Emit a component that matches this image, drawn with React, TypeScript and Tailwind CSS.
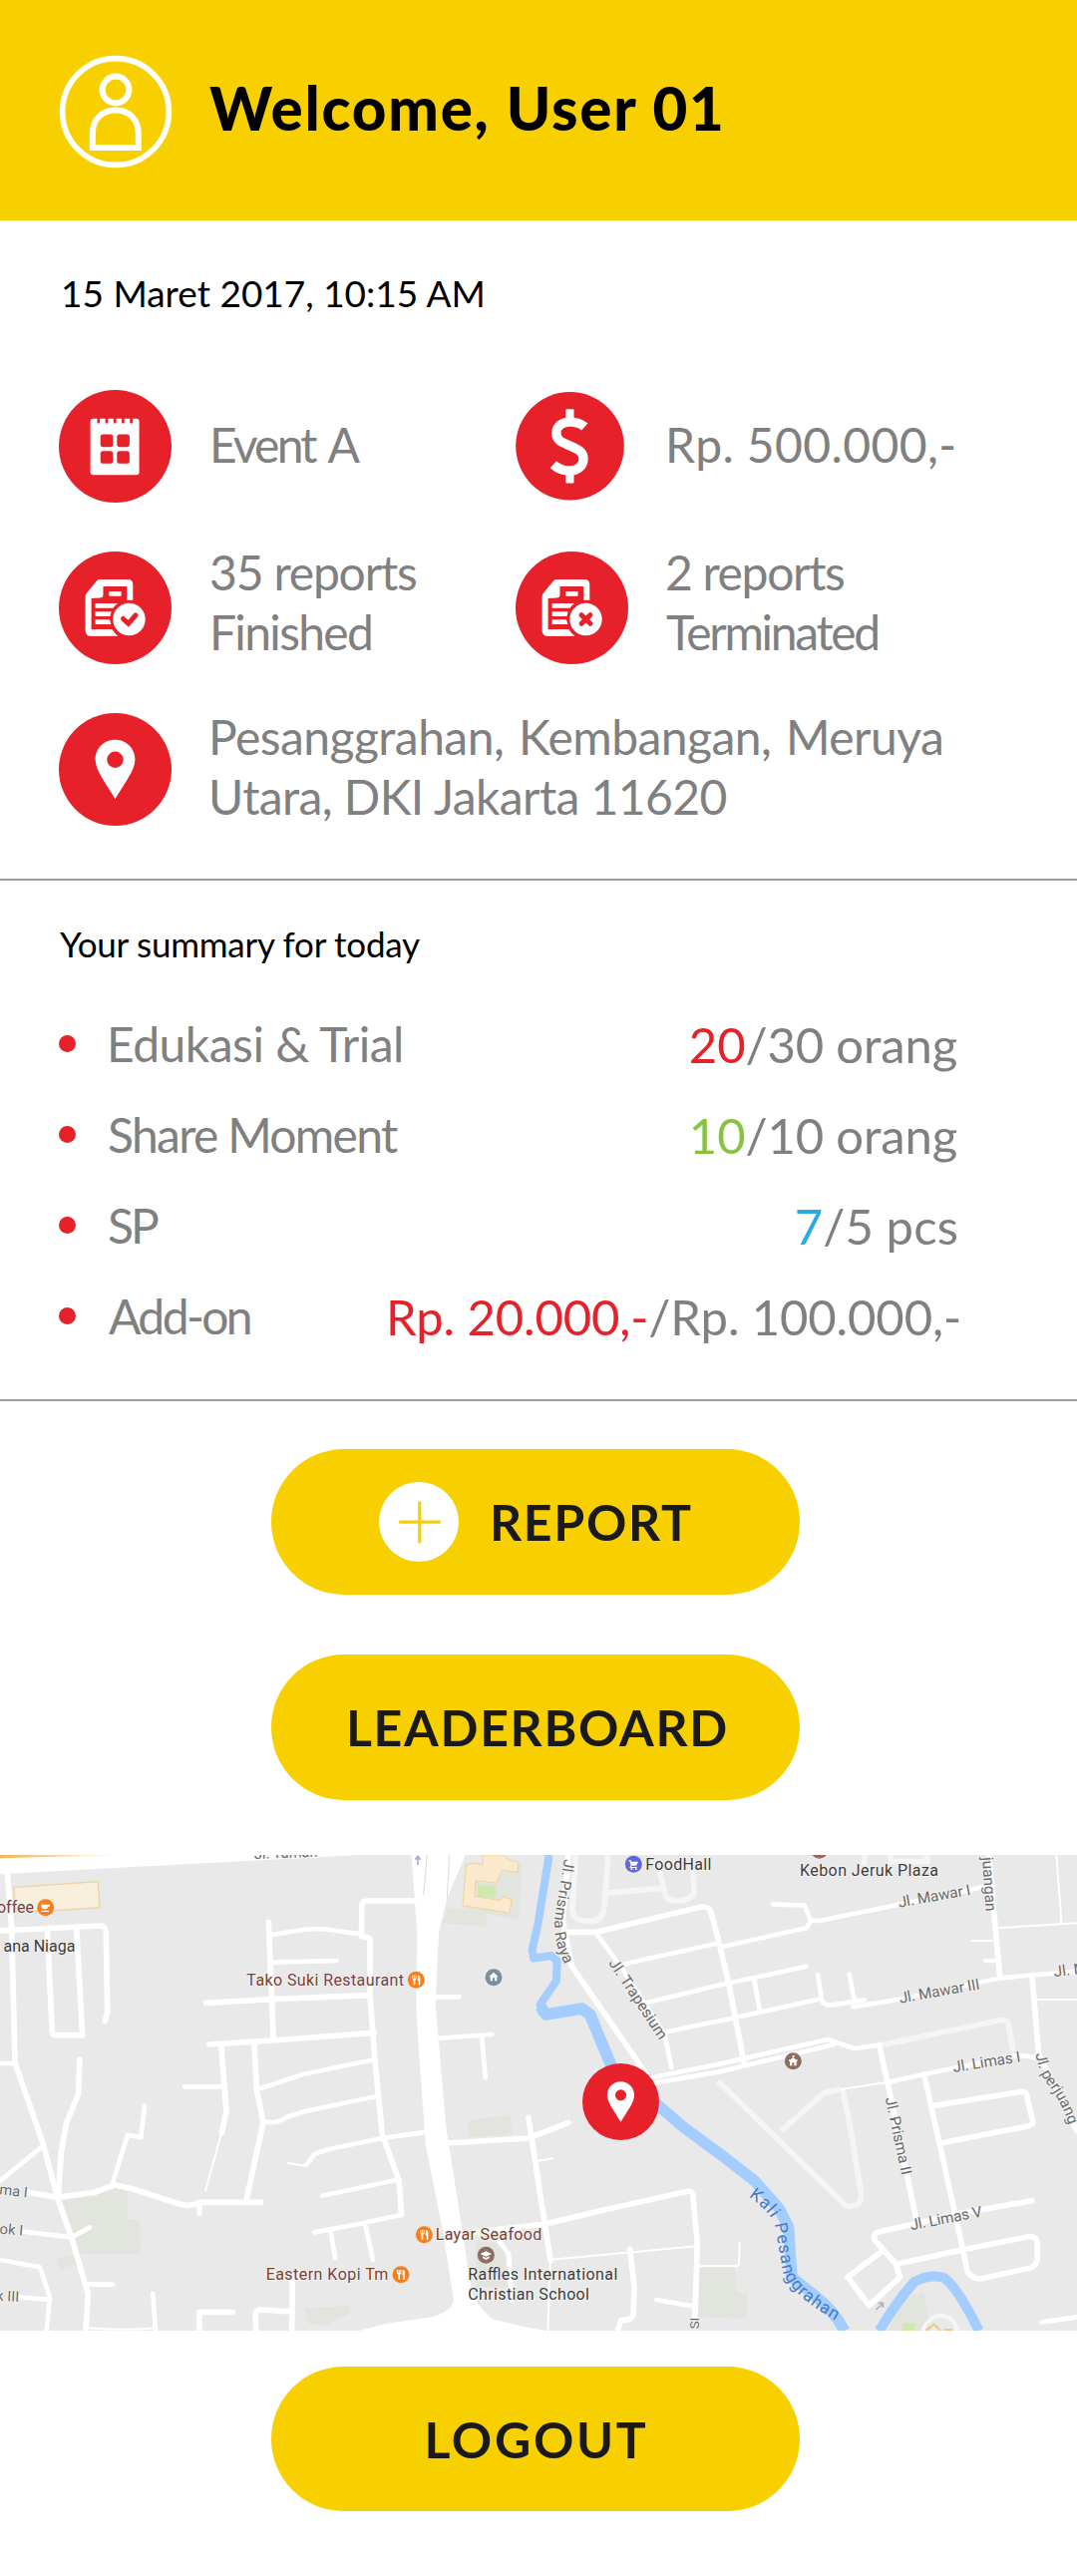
import React, { type ReactNode } from "react";

const RED = "#e62129";

/* ---------- Icons ---------- */

function UserIcon() {
  return (
    <svg viewBox="0 0 114 114" className="size-[114px] shrink-0" fill="none" stroke="#fff">
      <circle cx="57" cy="57" r="53.4" strokeWidth="5.6" />
      <circle cx="57" cy="35" r="13.4" strokeWidth="6" />
      <path d="M33.8 93V79C33.8 65 43 55.5 56.8 55.5S79.8 65 79.8 79V93Z" strokeWidth="6" />
    </svg>
  );
}

function Disc({ children, r = 56.5, cx = 56.5, cy = 56.5 }: { children: ReactNode; r?: number; cx?: number; cy?: number }) {
  return (
    <svg viewBox="0 0 113 113" className="size-full shrink-0">
      <circle cx={cx} cy={cy} r={r} fill={RED} />
      {children}
    </svg>
  );
}

function CalendarIcon() {
  return (
    <Disc>
      <rect x="31.6" y="28.7" width="49" height="56.6" rx="3" fill="#fff" />
      {[39.8, 48, 56.2, 64.4, 72.6].map((x) => (
        <path key={x} d={`M${x} 26V32.3`} stroke={RED} strokeWidth="2.7" strokeLinecap="round" />
      ))}
      <g fill={RED}>
        <rect x="41.7" y="44.6" width="12.6" height="12.6" rx="2.6" />
        <rect x="58.3" y="44.6" width="12.6" height="12.6" rx="2.6" />
        <rect x="41.7" y="61.2" width="12.6" height="12.6" rx="2.6" />
        <rect x="58.3" y="61.2" width="12.6" height="12.6" rx="2.6" />
      </g>
    </Disc>
  );
}

function DollarIcon() {
  return (
    <Disc r={54.3} cx={54.5} cy={56.3}>
      <path
        d="M69.3 37C65.5 33.6 60 32.1 54.7 32.1 46 32.1 40.9 37 40.9 43.5 40.9 51 47.5 53 54.5 56 62 59.2 68 61.5 68 69 68 76.5 62 81 54 81 47.5 81 42 78.5 37.8 74.7"
        fill="none"
        stroke="#fff"
        strokeWidth="9.4"
      />
      <rect x="50.3" y="19.3" width="8.2" height="12" rx="1" fill="#fff" />
      <rect x="50.3" y="81.5" width="8.2" height="12" rx="1" fill="#fff" />
    </Disc>
  );
}

function DocumentIcon({ done }: { done: boolean }) {
  return (
    <Disc>
      <g fill="#fff">
        <path d="M40.4 28H69Q74.3 28 74.3 33V48.8H68.3V35H44.5V43Q44.5 46.5 41 46.5L32.6 47V78H53.5Q55.500 82 59.5 84.8L32 85Q26.6 84.5 26.6 79V45Q26.6 43 28.5 41L37.5 30Q39 28 40.4 28Z" />
        <rect x="50.3" y="40" width="12.3" height="4.7" rx=".6" />
        <path d="M36.6 52H59.3Q56 54 54.5 56.7H36.6ZM36.6 60.3H52.6L51.5 65H36.6ZM36.6 68.3H51L52.3 73H36.6Z" />
        <circle cx="70.5" cy="68" r="16.2" />
      </g>
      <path
        d={done ? "M64.5 67.5 69.7 72.3 77 64" : "M66.1 63.7 74.9 72.3M74.9 63.7 66.1 72.3"}
        fill="none"
        stroke={RED}
        strokeWidth="5"
        strokeLinecap="round"
      />
    </Disc>
  );
}

function PinIcon() {
  return (
    <Disc>
      <path
        d="M56.5 26.7C45.5 26.7 36.6 35.3 36.6 46.5 36.6 58 47.5 70.5 56.5 86.3 65.5 70.5 76.4 58 76.4 46.5 76.4 35.3 67.5 26.7 56.5 26.7Z"
        fill="#fff"
      />
      <circle cx="56.5" cy="46.8" r="8.2" fill={RED} />
    </Disc>
  );
}

function PlusIcon() {
  return (
    <svg viewBox="0 0 80 80" className="size-20 shrink-0">
      <circle cx="40" cy="40" r="40" fill="#fff" />
      <path d="M21.5 40.2H60.5M40.8 20.8V59.8" stroke="#f8d000" strokeWidth="3.3" strokeLinecap="round" />
    </svg>
  );
}

/* ---------- Info grid ---------- */

function Info({ icon, gap, children }: { icon: ReactNode; gap: string; children: ReactNode }) {
  return (
    <div className={`flex h-[113px] items-start ${gap}`}>
      <div className="size-[113px] shrink-0">{icon}</div>
      {children}
    </div>
  );
}

/* ---------- Summary ---------- */

interface SummaryItem {
  label: string;
  labelClass: string;
  value: string;
  valueColor: string;
  target: string;
  rightClass: string;
}

const SUMMARY: SummaryItem[] = [
  { label: "Edukasi & Trial", labelClass: "ml-[1px] tracking-[-0.5px]", value: "20", valueColor: "text-[#e62129]", target: "/30 orang", rightClass: "mr-[120px] tracking-[-0.15px]" },
  { label: "Share Moment", labelClass: "ml-[2px] tracking-[-1.7px]", value: "10", valueColor: "text-[#86c440]", target: "/10 orang", rightClass: "mr-[120px] tracking-[-0.15px]" },
  { label: "SP", labelClass: "ml-[2px] tracking-[-3px]", value: "7", valueColor: "text-[#29abe2]", target: "/5 pcs", rightClass: "mr-[119px] tracking-[0.1px]" },
  { label: "Add-on", labelClass: "ml-[3px] tracking-[-2.6px]", value: "Rp. 20.000,-", valueColor: "text-[#e62129]", target: "/Rp. 100.000,-", rightClass: "mr-[116px] tracking-[-0.13px]" },
];

/* ---------- Map ---------- */

/** Streets grouped by stroke width, in map units (three per pixel). */
const STREETS: { width: number; d: string[] }[] = [
  {
    width: 17,
    d: [
      "M22 85 35 250 45 655 130 900 172 1060 215 1180 265 1350 258 1461",
      "M0 258 300 243Q318 243 319 262L323 500 316 530",
      "M142 250 157 565Q158 572 168 572H248L230 250",
      "M240 645 236 750 200 835 184 925 175 1060",
      "M85 1045 172 1060 285 1045 345 1022 400 1035 540 1080Q570 1090 600 1075H785M600 1075V1108",
      "M808 232 822 580",
      "M620 475 820 464 1110 452M630 600 820 588 1125 565",
      "M665 600 681 800 667 865M765 595 772 735 792 835 742 1065",
      "M880 1300 878 1461M600 1461V1405H700M770 1461 768 1415Q770 1395 790 1398L875 1404",
      "M1250 168H1102Q1088 168 1088 190V275L1108 278Q1115 282 1113 300V450L1128 650 1150 870 1200 1010 1208 1112",
      "M1345 897 1590 882 1710 835M1590 820 1625 1050 1656 1250",
      "M1425 1165 1640 1140 1830 1095 2070 1042Q2085 1040 2085 1060L2098 1200 2090 1430",
      "M1895 1215 1908 1330 1905 1415Q1900 1430 1868 1430L1858 1461",
      "M1710 30 1693 230 1720 365 1945 690M1695 262H1795L2110 186Q2135 185 2140 205L2165 300 2195 430 2238 655",
      "M2975 30 2990 200 3008 395M3105 400 3125 630 3160 700 3240 860",
      "M2645 602 2680 760 2755 1120",
      "M2780 690 2880 1140 2910 1280Q2920 1305 2950 1305L3100 1272Q3120 1265 3121 1240V1200Q3120 1175 3095 1178L2895 1218 2700 1260",
      "M2805 785 3075 742Q3085 742 3088 750L3108 835Q3105 842 3095 845L2830 897",
      "M3105 1070 2880 1110 2640 1165Q2625 1170 2632 1190L2695 1260 2708 1300 2615 1385 2550 1300 2650 1225",
    ],
  },
  {
    width: 14,
    d: [
      "M0 657H45M435 785 424 880 384 872 335 1030M0 1010 130 905M65 1162 215 1180 270 1150",
      "M0 1248 120 1270 150 1360 140 1461M60 1360 150 1368M265 1322H340M460 1350 468 1461",
      "M822 270 880 260Q950 245 1010 258L1088 268M825 353 1012 348M555 727H672",
      "M785 732 910 690 1130 645M798 832Q830 840 860 820L920 800 1130 757",
      "M920 962Q935 950 945 930L990 915 1150 882 1290 862M970 1055 1190 1008M945 1165 1080 1140 1208 1112M995 1165 1008 1242M1100 1150 1122 1248",
      "M1310 457H1382M1310 582 1480 570M1450 580 1460 700M1500 1190 1530 1230 1540 1370",
      "M1975 1368 2085 1388M1795 268 1870 370 2000 570 2020 670",
      "M1880 358 2155 296M1945 475 2160 422 2265 400 2425 365M2005 562 2160 530 2460 465",
      "M2460 390 2472 465Q2475 482 2500 482L2600 466M2555 388 2570 465M2268 400 2285 495M2565 487 2720 462 3010 400 3240 380",
      "M2325 178 2420 182 2440 228H2465L2700 180 2990 120M2175 305 2425 250 2440 228",
      "M2965 348H3000M2680 712 2780 690 3060 632 3125 640M3135 1435 3240 1420",
      "M1960 700 2160 660 2490 585 2570 612 2645 602M1970 716 2160 683 2510 600",
    ],
  },
  {
    width: 6,
    d: [
      "M667 865 618 1040M865 957 920 965M1656 1250 1648 1461M1620 950 1662 943M1658 1247 2095 1207",
      "M2105 1267H2215Q2223 1267 2223 1255L2225 1195M3000 250 3240 235M3178 30 3193 232M2925 288H2985M3120 465H3240M2530 735 2680 712",
      "M265 1453Q370 1462 470 1453",
    ],
  },
];

const FAINT_STREETS = [
  "M1732 30 1722 190Q1722 228 1760 228H1780Q1812 228 1817 190L1830 30M1822 145 1990 130",
  "M1985 80 2000 145Q2005 170 2040 168 2085 165 2088 140L2085 60",
  "M2650 602 3010 527Q3030 522 3034 540L3048 620M2530 735 2480 745 2350 860",
  "M2160 710 2545 1085Q2592 1095 2591 1050L2560 860 2535 735",
  "M2600 30V60M2680 30V50H2790V30",
];

function Poi({ x, y, color, children }: { x: number; y: number; color: string; children?: ReactNode }) {
  return (
    <g transform={`translate(${x} ${y})`}>
      <circle r="25.5" fill={color} />
      <g fill="#fff">{children}</g>
    </g>
  );
}

function Cutlery() {
  return <path d="M-12-14h3v9h2v-9h3v9h2v-9h3V-4l-4 5V15h-5V1l-4-5ZM5-14q7 0 7 8V15H7V2H4Z" />;
}

function Label({ x, y, len, rotate = 0, color = "#3c3c3c", size = 48, anchor = "start", children }: {
  x: number; y: number; len?: number; rotate?: number; color?: string; size?: number; anchor?: "start" | "end"; children: string;
}) {
  return (
    <text
      transform={`translate(${x} ${y}) rotate(${rotate})`}
      fontSize={size}
      fill={color}
      textLength={len}
      textAnchor={anchor}
      stroke="#f4f4f4"
      strokeWidth="5"
      paintOrder="stroke"
    >
      {children}
    </text>
  );
}

function StreetMap() {
  const street = "#6b6b6b";
  const food = "#7d4033";
  return (
    <svg viewBox="0 30 3240 1431" className="block h-full w-full font-[Roboto]" preserveAspectRatio="none">
      <defs>
        <path id="prisma-raya" d="M1697 42 1668 225Q1664 300 1706 372" />
        <path id="perjuangan" d="M3116 628Q3124 690 3160 730 3200 785 3228 880" />
        <path id="kali" d="M2252 1058Q2322 1105 2332 1150L2354 1275Q2368 1350 2530 1440" />
        <linearGradient id="streak" x1="0" x2="1">
          <stop offset="0" stopColor="#f3b65b" />
          <stop offset="1" stopColor="#f3b65b" stopOpacity="0" />
        </linearGradient>
      </defs>
      <rect y="30" width="3240" height="1431" fill="#e9e9e9" />

      <g fill="#e2e4de">
        <path d="M190 1070 330 1030 383 1040V1125L420 1130 422 1230H240ZM170 1245 225 1230 230 1260 180 1275ZM915 1395 1052 1385 1050 1410 980 1445 930 1440Z" />
        <path d="M1350 190 1462 200V245L1330 235ZM1410 828 1532 812 1545 870 1410 880ZM1430 1190 1515 1200 1525 1330H1435ZM1400 50 1570 60 1560 225 1395 190Z" />
        <path d="M2105 1270H2210L2215 1345 2250 1350 2245 1425 2100 1420ZM2670 1461 2720 1360 2780 1345 2800 1461Z" />
      </g>

      <g fill="none" stroke="#f5f5f5" strokeWidth="17" strokeLinejoin="round">
        {FAINT_STREETS.map((d) => (
          <path key={d} d={d} />
        ))}
      </g>

      <g fill="none" stroke="#a3ccff" strokeLinejoin="round">
        <path d="M1652 30 1618 240 1601 315 1606 341 1658 333 1676 348 1674 408 1625 480 1632 510" strokeWidth="24" />
        <path d="M1625 485 1643 510 1750 492 1775 510 1808 590 1850 690" strokeWidth="35" />
        <path d="M1930 740 1990 792 2060 852 2160 925 2270 1010 2345 1095 2372 1150 2382 1300 2450 1355Q2510 1400 2540 1461" strokeWidth="34" />
        <path d="M2645 1461Q2700 1370 2750 1315 2795 1288 2840 1302 2880 1330 2945 1461" strokeWidth="30" />
      </g>

      <path d="M42 127 295 110 300 188 130 200 45 195Z" fill="#f7eedb" stroke="#ecd3a0" strokeWidth="4" />
      <path
        d="M1425 55 1452 60V30H1515L1530 44 1560 52 1557 82 1510 76 1495 115 1452 108H1430L1428 155 1505 166 1515 155 1540 165 1533 205 1392 182 1402 60Z"
        fill="#fbe9cd"
        stroke="#f0d29c"
        strokeWidth="3"
      />
      <path d="M1437 120 1492 122 1490 158 1437 155Z" fill="#cfe8b0" />
      <path d="M2720 1438H2758L2750 1461H2712Z" fill="#cfe9b0" />
      <path d="M2775 1461Q2795 1415 2835 1415 2870 1420 2880 1461" fill="none" stroke="#f6f6f6" strokeWidth="12" />
      <path d="M2785 1461 2810 1442 2830 1461M2840 1458H2865" fill="none" stroke="#f0c98a" strokeWidth="6" />

      <path d="M0 30H1080L780 46 0 88Z" fill="#fff" />
      <path d="M0 30H380L0 40Z" fill="url(#streak)" />
      <path
        d="M1238 30 1255 265 1252 500 1280 900 1330 1150 1365 1370Q1360 1400 1300 1420L1160 1440 1080 1461H1640L1580 1450 1480 1425Q1440 1390 1420 1350L1380 1090 1342 850 1310 480 1320 265 1345 160 1400 30Z"
        fill="#fff"
      />
      <path d="M1285 30 1274 150M1352 30 1345 160" stroke="#dfdad2" strokeWidth="3" />

      {STREETS.map((group) => (
        <g key={group.width} fill="none" stroke="#fff" strokeWidth={group.width} strokeLinecap="round" strokeLinejoin="round">
          {group.d.map((d) => (
            <path key={d} d={d} />
          ))}
        </g>
      ))}
      <path d="M1257 60V34M1249 44 1257 34 1265 44M2635 1398 2655 1380M2642 1378H2656V1392" fill="none" stroke="#a9aecb" strokeWidth="5" />

      <Label x={102} y={205} color={food} anchor="end">offee</Label>
      <Label x={226} y={320} anchor="end">ana Niaga</Label>
      <Label x={742} y={422} len={473} color={food}>Tako Suki Restaurant</Label>
      <Label x={1310} y={1187} len={320} color={food}>Layar Seafood</Label>
      <Label x={800} y={1307} len={368} color={food}>Eastern Kopi Tm</Label>
      <Label x={1408} y={1307} len={450}>Raffles International</Label>
      <Label x={1408} y={1367} len={365}>Christian School</Label>
      <Label x={1942} y={74} len={198}>FoodHall</Label>
      <Label x={2406} y={92} len={417}>Kebon Jeruk Plaza</Label>

      <Label x={765} y={42} rotate={-2} color={street} size={44}>Jl. Taman</Label>
      <Label x={82} y={1060} rotate={6} color={street} size={44} anchor="end">ma I</Label>
      <Label x={68} y={1175} rotate={5} color={street} size={44} anchor="end">ok I</Label>
      <Label x={57} y={1374} rotate={3} color={street} size={44} anchor="end">k III</Label>
      <Label x={2705} y={188} rotate={-10} len={220} color={street} size={46}>Jl. Mawar I</Label>
      <Label x={2708} y={476} rotate={-10} len={245} color={street} size={46}>Jl. Mawar III</Label>
      <Label x={3172} y={397} rotate={-7} color={street} size={46}>Jl. M</Label>
      <Label x={2869} y={684} rotate={-9} len={205} color={street} size={46}>Jl. Limas I</Label>
      <Label x={2741} y={1159} rotate={-11} len={220} color={street} size={46}>Jl. Limas V</Label>
      <Label x={2663} y={762} rotate={78} len={238} color={street} size={46}>Jl. Prisma II</Label>
      <Label x={1830} y={355} rotate={56.5} len={280} color={street} size={46}>Jl. Trapesium</Label>
      <Label x={2966} y={200} rotate={86} color={street} size={46} anchor="end">juangan</Label>
      <Label x={2104} y={1456} rotate={-90} color={street} size={40}>SI</Label>

      <g fontSize="46" fill={street} stroke="#f4f4f4" strokeWidth="5" paintOrder="stroke">
        <text textLength="325">
          <textPath href="#prisma-raya">Jl. Prisma Raya</textPath>
        </text>
        <text>
          <textPath href="#perjuangan">Jl. perjuang</textPath>
        </text>
      </g>
      <text fontSize="52" fill="#4679c8" textLength="480">
        <textPath href="#kali">Kali Pesanggrahan</textPath>
      </text>

      <Poi x={137} y={188} color="#f8801c">
        <path d="M-14-9H13V-2H8Q7 5 0 5H-6Q-12 5-12-2ZM-14 9H10V13H-14Z" />
      </Poi>
      <Poi x={1252} y={406} color="#f8801c"><Cutlery /></Poi>
      <Poi x={1276} y={1172} color="#f8801c"><Cutlery /></Poi>
      <Poi x={1206} y={1292} color="#f8801c"><Cutlery /></Poi>
      <Poi x={1485} y={398} color="#78909c">
        <path d="M0-15 14-2H10V11H3V2H-3V11H-10V-2H-14Z" />
      </Poi>
      <Poi x={1906} y={58} color="#5f69dd">
        <path d="M-15-12H-8L-6-8H14L8 4H-5L-7 8H10V11H-12L-8 2-12-9H-15ZM-8 12H-3V17H-8ZM5 12H10V17H5Z" />
      </Poi>
      <Poi x={1462} y={1234} color="#8d6e63">
        <path d="M0-12 17-4 0 4-17-4ZM-10 3 0 8 10 3V9L0 14-10 9Z" />
      </Poi>
      <Poi x={2386} y={650} color="#8d6e63">
        <path d="M-2-17H4V-12H1V-8H6V-4H13V0H10V14H3V5H-3V14H-10V0H-13V-4H-6V-8H-2Z" />
      </Poi>
      <Poi x={2465} y={16} color="#8d6e63" />
    </svg>
  );
}

/* ---------- Screen ---------- */

export default function App() {
  return (
    <div className="flex h-[2583px] w-[1080px] flex-col overflow-hidden bg-white font-['Lato',sans-serif] text-black">
      <header className="flex h-[221px] shrink-0 items-start gap-[37px] bg-[#f8d000] pt-[55px] pl-[59px]">
        <UserIcon />
        <h1 className="mt-[23px] text-[60px] leading-[60px] font-black tracking-[1.8px] whitespace-nowrap">Welcome, User 01</h1>
      </header>

      <p className="mt-[53px] pl-[61px] text-[37px] leading-10">15 Maret 2017, 10:15 AM</p>

      <section className="mt-[77px] grid grid-cols-[458px_1fr] gap-y-[49px] pl-[59px] text-[48px] leading-[60px] whitespace-nowrap text-[#808080]">
        <Info icon={<CalendarIcon />} gap="gap-[38px]">
          <p className="mt-[25px] tracking-[-2.8px] [word-spacing:5px]">Event A</p>
        </Info>
        <Info icon={<DollarIcon />} gap="gap-[37px]">
          <p className="mt-[25px] tracking-[0.4px]">Rp. 500.000,-</p>
        </Info>
        <Info icon={<DocumentIcon done />} gap="gap-[38px]">
          <p className="-mt-[9px]">
            <span className="tracking-[-1.18px]">35 reports</span>
            <br />
            <span className="tracking-[-1.68px]">Finished</span>
          </p>
        </Info>
        <Info icon={<DocumentIcon done={false} />} gap="gap-[37px]">
          <p className="-mt-[9px]">
            <span className="tracking-[-1.34px]">2 reports</span>
            <br />
            <span className="ml-[1px] tracking-[-2.3px]">Terminated</span>
          </p>
        </Info>
        <div className="col-span-2">
          <Info icon={<PinIcon />} gap="gap-[37px]">
            <p className="-mt-[6px]">
              <span className="tracking-[-0.55px] [word-spacing:3px]">Pesanggrahan, Kembangan, Meruya</span>
              <br />
              <span className="tracking-[-0.6px]">Utara, DKI Jakarta 11620</span>
            </p>
          </Info>
        </div>
      </section>

      <hr className="mt-[53px] h-[2px] shrink-0 border-0 bg-[#9c9c9c]" />

      <h2 className="mt-[43px] pl-[60px] text-[35px] leading-10 tracking-[-0.25px]">Your summary for today</h2>

      <ul className="mt-[35px] text-[48px] leading-[60px] whitespace-nowrap text-[#808080]">
        {SUMMARY.map((item) => (
          <li key={item.label} className="flex h-[91px] items-center pl-[59px]">
            <span className="mr-[30px] size-[17px] shrink-0 rounded-full bg-[#e62129]" />
            <span className={item.labelClass}>{item.label}</span>
            <span className={`ml-auto text-[49px] ${item.rightClass}`}>
              <span className={item.valueColor}>{item.value}</span>
              {item.target}
            </span>
          </li>
        ))}
      </ul>

      <hr className="mt-[38px] h-[2px] shrink-0 border-0 bg-[#9c9c9c]" />

      <div className="mt-12 ml-[272px] flex w-[530px] flex-col gap-[60px] text-[50px] leading-[60px] font-bold text-[#1a1a1a]">
        <button className="flex h-[146px] items-center gap-[31px] rounded-full bg-[#f8d000] pl-[108px] tracking-[1.7px]">
          <PlusIcon />
          REPORT
        </button>
        <button className="flex h-[146px] items-center justify-center rounded-full bg-[#f8d000] pl-1 tracking-[1.7px]">LEADERBOARD</button>
      </div>

      <div className="relative mt-[55px] h-[477px] shrink-0 overflow-hidden">
        <StreetMap />
        <div className="absolute top-[209px] left-[584px] size-[77px]">
          <PinIcon />
        </div>
      </div>

      <button className="mt-9 ml-[272px] flex h-[145px] w-[530px] shrink-0 items-center justify-center rounded-full bg-[#f8d000] pl-[2px] text-[50px] leading-[60px] font-bold tracking-[2.7px] text-[#1a1a1a]">
        LOGOUT
      </button>
    </div>
  );
}
